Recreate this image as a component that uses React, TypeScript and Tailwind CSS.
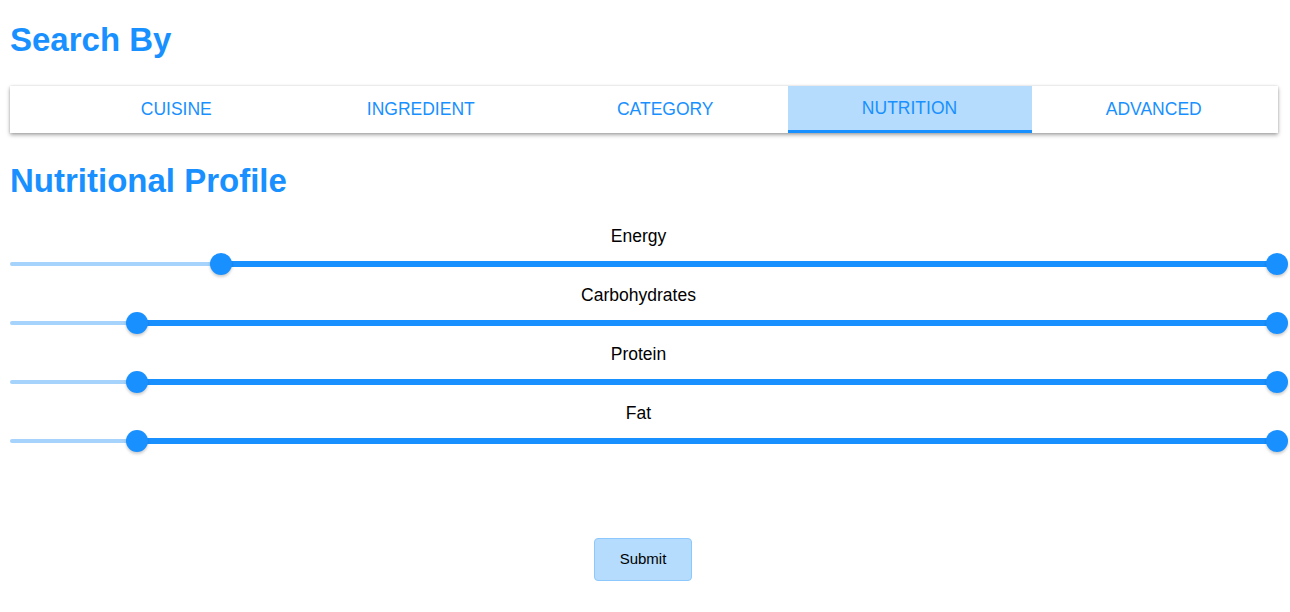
import React from 'react';

const tabs = ['Cuisine', 'Ingredient', 'Category', 'Nutrition', 'Advanced'];

const sliders = [
  { label: 'Energy', min: 16.65 },
  { label: 'Carbohydrates', min: 10 },
  { label: 'Protein', min: 10 },
  { label: 'Fat', min: 10 },
];

function RangeSlider({ label, min }: { label: string; min: number }) {
  return (
    <div className="flex flex-col">
      <div className="pr-[13px] text-center text-[17.5px] leading-[18px] text-black">{label}</div>
      <div className="relative mr-[3px] flex h-[41px] items-start pt-[16px]">
        {/* rail + active track */}
        <div className="mt-[1px] h-[4px] rounded-l-full bg-[#a5d3fb]" style={{ width: `${min}%` }} />
        <div className="h-[6px] flex-1 bg-[#1890ff]" />
        <div
          className="absolute top-[8px] h-[22px] w-[22px] -translate-x-1/2 rounded-full bg-[#1890ff] shadow-[0_2px_3px_rgba(0,0,0,0.2)]"
          style={{ left: `${min}%` }}
        />
        <div className="absolute left-full top-[8px] h-[22px] w-[22px] -translate-x-1/2 rounded-full bg-[#1890ff] shadow-[0_2px_3px_rgba(0,0,0,0.2)]" />
      </div>
    </div>
  );
}

export default function App() {
  return (
    <div className="flex min-h-screen flex-col bg-white px-[10px] font-['Liberation_Sans',Arial,sans-serif]">
      <h1 className="pt-[21px] text-[33px] font-bold leading-[37px] text-[#1890ff]">Search By</h1>

      {/* tabs */}
      <div className="mr-[2px] mt-[28px] flex h-[47px] bg-white pl-[44px] shadow-[0_2px_4px_rgba(0,0,0,0.35),0_0_2px_rgba(0,0,0,0.12)]">
        {tabs.map((t) => {
          const active = t === 'Nutrition';
          return (
            <div
              key={t}
              className={
                active
                  ? 'flex w-[244px] items-center justify-center border-b-[3px] border-[#1890ff] bg-[#b5dcfd] text-[17.5px] uppercase text-[#1890ff]'
                  : 'flex w-[244.5px] items-center justify-center text-[17.5px] uppercase text-[#1890ff]'
              }
            >
              {t}
            </div>
          );
        })}
      </div>

      <h2 className="mt-[29px] text-[33px] font-bold leading-[37px] text-[#1890ff]">Nutritional Profile</h2>

      <div className="mt-[28px] flex flex-col">
        {sliders.map((s) => (
          <RangeSlider key={s.label} label={s.label} min={s.min} />
        ))}
      </div>

      <div className="mt-[75px] flex justify-center pr-[4px]">
        <button className="h-[43px] w-[98px] rounded-[4px] border border-[#8cc8fb] bg-[#b5dcfd] text-[15px] text-black">
          Submit
        </button>
      </div>
    </div>
  );
}
